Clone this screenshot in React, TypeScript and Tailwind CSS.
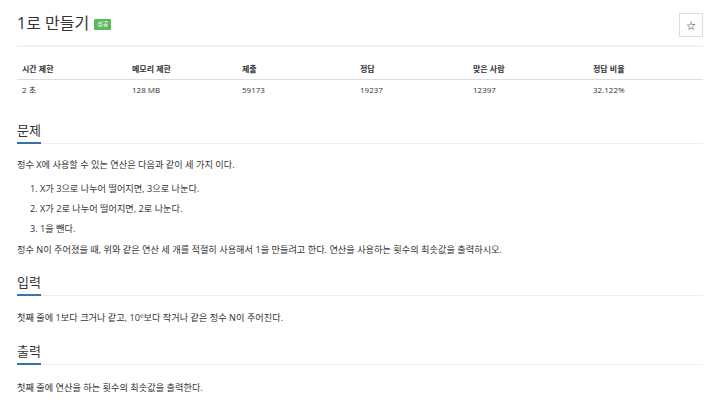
const stats = [
  { label: "시간 제한", value: "2 초", w: "w-[110px]" },
  { label: "메모리 제한", value: "128 MB", w: "w-[110px]" },
  { label: "제출", value: "59173", w: "w-[118px]" },
  { label: "정답", value: "19237", w: "w-[113px]" },
  { label: "맞은 사람", value: "12397", w: "w-[120px]" },
  { label: "정답 비율", value: "32.122%", w: "" },
];

function SectionTitle({ children, gap = "mb-[11px]" }: { children: string; gap?: string }) {
  return (
    <div className={`border-b border-[#f0f0f0] ${gap}`}>
      <h2 className="inline-block text-[13px] leading-[16px] text-[#333] pb-[4px] border-b-2 border-[#3a6fb0] mb-[-1px]">
        {children}
      </h2>
    </div>
  );
}

export default function App() {
  return (
    <div
      className="min-h-screen bg-white px-[17px] pt-[12px] text-[#333]"
      style={{ fontFamily: '"Open Sans", "Noto Sans CJK KR", sans-serif' }}
    >
      <div className="flex items-start justify-between pb-[8px] border-b-2 border-[#f2f2f2]">
        <div className="flex items-center gap-[5px]">
          <h1 className="text-[16px] leading-[22px] font-normal">1로 만들기</h1>
          <span className="mt-[3px] h-[11px] bg-[#5cb85c] text-white text-[6px] leading-[11px] px-[3px] rounded-[1px]">
            성공
          </span>
        </div>
        <button className="mt-[1px] w-[24px] h-[24px] border border-[#ddd] bg-white text-[9px] leading-none text-[#222] flex items-center justify-center">
          ☆
        </button>
      </div>

      <table className="w-full table-fixed mt-[12px] text-[8px] leading-[12px] text-[#333]">
        <thead>
          <tr className="border-b border-[#ddd]">
            {stats.map((s) => (
              <th key={s.label} className={`${s.w} text-left font-bold px-[5px] py-[4px]`}>
                {s.label}
              </th>
            ))}
          </tr>
        </thead>
        <tbody>
          <tr>
            {stats.map((s) => (
              <td key={s.label} className="px-[5px] py-[4px]">
                {s.value}
              </td>
            ))}
          </tr>
        </tbody>
      </table>

      <div className="mt-[22px] text-[9.2px] leading-[19px]">
        <SectionTitle>문제</SectionTitle>
        <p className="mb-[5px]">정수 X에 사용할 수 있는 연산은 다음과 같이 세 가지 이다.</p>
        <ol className="list-decimal pl-[23px] mb-[1px]">
          <li className="leading-[20px]">X가 3으로 나누어 떨어지면, 3으로 나눈다.</li>
          <li className="leading-[20px]">X가 2로 나누어 떨어지면, 2로 나눈다.</li>
          <li className="leading-[20px]">1을 뺀다.</li>
        </ol>
        <p className="mb-[15px]">
          정수 N이 주어졌을 때, 위와 같은 연산 세 개를 적절히 사용해서 1을 만들려고 한다. 연산을 사용하는 횟수의 최솟값을 출력하시오.
        </p>

        <SectionTitle gap="mb-[12px]">입력</SectionTitle>
        <p className="mb-[16px]">
          첫째 줄에 1보다 크거나 같고, 10<sup className="text-[6px]">6</sup>보다 작거나 같은 정수 N이 주어진다.
        </p>

        <SectionTitle gap="mb-[13px]">출력</SectionTitle>
        <p>첫째 줄에 연산을 하는 횟수의 최솟값을 출력한다.</p>
      </div>
    </div>
  );
}
